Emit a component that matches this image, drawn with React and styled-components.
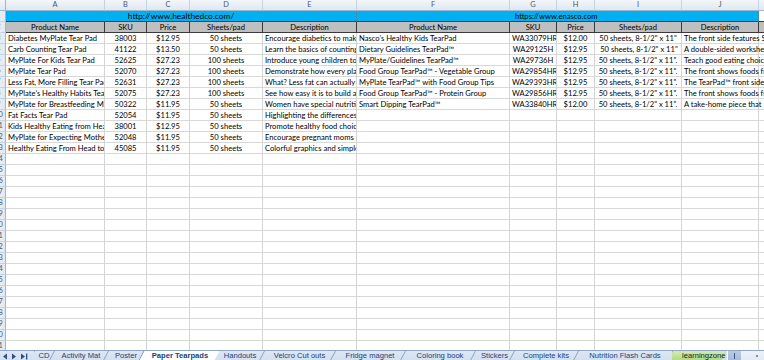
import React from "react";
import styled, { createGlobalStyle, css } from "styled-components";

const Global = createGlobalStyle`
  html, body { margin: 0; padding: 0; background: #ffffff; }
  body { overflow: hidden; }
  * { box-sizing: border-box; }
`;

const CELL_FONT = `"Lato", "Open Sans", "Liberation Sans", sans-serif`;
const UI_FONT = `"Liberation Sans", "DejaVu Sans", sans-serif`;

const COLS = [
  { key: "A", w: 99 },
  { key: "B", w: 42 },
  { key: "C", w: 43 },
  { key: "D", w: 73 },
  { key: "E", w: 94 },
  { key: "F", w: 153 },
  { key: "G", w: 47 },
  { key: "H", w: 38 },
  { key: "I", w: 87 },
  { key: "J", w: 77 },
  { key: "K", w: 90 },
];

const ALIGN = ["left", "center", "center", "center", "left", "left", "center", "center", "center", "left", "left"];

const DATA = [
  ["Diabetes MyPlate Tear Pad", "38003", "$12.95", "50 sheets", "Encourage diabetics to make healthy choices", "Nasco\u2019s Healthy Kids TearPad", "WA33079HR", "$12.00", "50 sheets, 8-1/2\" x 11\"", "The front side features Step"],
  ["Carb Counting Tear Pad", "41122", "$13.50", "50 sheets", "Learn the basics of counting carbs", "Dietary Guidelines TearPad\u2122", "WA29125H", "$12.95", "\u00a050 sheets, 8-1/2\" x 11\"", "A double-sided worksheet"],
  ["MyPlate For Kids Tear Pad", "52625", "$27.23", "100 sheets", "Introduce young children to MyPlate", "MyPlate/Guidelines TearPad\u2122", "WA29736H", "$12.95", "50 sheets, 8-1/2\" x 11\".", "Teach good eating choices"],
  ["MyPlate Tear Pad", "52070", "$27.23", "100 sheets", "Demonstrate how every plate", "Food Group TearPad\u2122 - Vegetable Group", "WA29854HR", "$12.95", "50 sheets, 8-1/2\" x 11\".", "The front shows foods from"],
  ["Less Fat, More Filling Tear Pad", "52631", "$27.23", "100 sheets", "What? Less fat can actually be more filling", "MyPlate TearPad\u2122 with Food Group Tips", "WA29393HR", "$12.95", "50 sheets, 8-1/2\" x 11\".", "The TearPad\u2122 front side"],
  ["MyPlate\u2019s Healthy Habits Tear Pad", "52075", "$27.23", "100 sheets", "See how easy it is to build a", "Food Group TearPad\u2122 - Protein Group", "WA29856HR", "$12.95", "50 sheets, 8-1/2\" x 11\".", "The front shows foods from"],
  ["MyPlate for Breastfeeding Moms", "50322", "$11.95", "50 sheets", "Women have special nutrition needs", "Smart Dipping TearPad\u2122", "WA33840HR", "$12.00", "50 sheets, 8-1/2\" x 11\".", "A take-home piece that"],
  ["Fat Facts Tear Pad", "52054", "$11.95", "50 sheets", "Highlighting the differences between"],
  ["Kids Healthy Eating from Head to Toe", "38001", "$12.95", "50 sheets", "Promote healthy food choices"],
  ["MyPlate for Expecting Mothers", "52048", "$11.95", "50 sheets", "Encourage pregnant moms to"],
  ["Healthy Eating From Head to Toe", "45085", "$11.95", "50 sheets", "Colorful graphics and simple"],
];

const HEADERS = ["Product Name", "SKU", "Price", "Sheets/pad", "Description", "Product Name", "SKU", "Price", "Sheets/pad", "Description", ""];

const TOTAL_ROWS = 31;

const TABS = [
  { name: "CD", w: 20 },
  { name: "Activity Mat", w: 54 },
  { name: "Poster", w: 36 },
  { name: "Paper Tearpads", w: 72, active: true },
  { name: "Handouts", w: 48 },
  { name: "Velcro Cut outs", w: 71 },
  { name: "Fridge magnet", w: 70 },
  { name: "Coloring book", w: 70 },
  { name: "Stickers", w: 39 },
  { name: "Complete kits", w: 64 },
  { name: "Nutrition Flash Cards", w: 94 },
  { name: "learningzone", w: 55, green: true },
];

/* ---------- layout ---------- */

const Page = styled.div`
  width: 764px;
  height: 360px;
  overflow: hidden;
  display: grid;
  grid-template-rows: 350px 20px;
`;

const SheetArea = styled.div`
  overflow: hidden;
  background: #ffffff;
`;

const Grid = styled.div`
  display: grid;
  grid-template-columns: 14px ${COLS.map((c) => `${c.w}px`).join(" ")};
  grid-auto-rows: 11px;
  margin-left: -8px;
  width: max-content;
`;

/* ---------- headers ---------- */

const Corner = styled.div`
  background: linear-gradient(#f4f7fb, #dfe7f1);
  border-right: 1px solid #9eb6ce;
  border-bottom: 1px solid #9eb6ce;
`;

const ColHeader = styled.div`
  background: linear-gradient(#f3f6fa, #e0e7f0);
  border-right: 1px solid #c5d2e0;
  border-bottom: 1px solid #9eb6ce;
  font: 7.4px/10px ${CELL_FONT};
  color: #4a596b;
  text-align: center;
`;

const RowHeader = styled.div`
  background: linear-gradient(90deg, #f3f6fa, #e3e9f1);
  border-right: 1px solid #9eb6ce;
  border-bottom: 1px solid #c5d2e0;
  font: 7.4px/10px ${CELL_FONT};
  color: #4a596b;
  text-align: center;
  white-space: nowrap;
`;

/* ---------- cells ---------- */

const kinds = {
  plain: css`
    background: #ffffff;
    border-right: 1px solid #d4d4d4;
    border-bottom: 1px solid #d8d8d8;
  `,
  link: css`
    background: #00b0f0;
    border-right: 1px solid #3c8fb3;
    border-bottom: 1px solid #3a3a3a;
  `,
  linkEnd: css`
    background: #ffffff;
    border-right: 1px solid #d4d4d4;
    border-bottom: 1px solid #3a3a3a;
  `,
  head: css`
    background: #bfbfbf;
    border-right: 1px solid #3a3a3a;
    border-bottom: 1px solid #3a3a3a;
  `,
};

const Cell = styled.div`
  ${(p) => kinds[p.$kind || "plain"]}
  grid-column: span ${(p) => p.$span || 1};
  padding: 0 ${(p) => p.$pad ?? 2}px;
  font: ${(p) => p.$size || 7.6}px/10px ${CELL_FONT};
  color: #000000;
  text-align: ${(p) => p.$align || "left"};
  white-space: nowrap;
  overflow: ${(p) => (p.$spill ? "visible" : "hidden")};
  position: ${(p) => (p.$spill ? "relative" : "static")};
  z-index: ${(p) => (p.$spill ? 1 : "auto")};
`;

/* ---------- sheet tabs ---------- */

const TabBar = styled.div`
  display: flex;
  align-items: flex-start;
  background: linear-gradient(#dde7f4, #c8d8ec);
  border-top: 1px solid #8ea7c7;
  position: relative;
  z-index: 1;
`;

const Nav = styled.div`
  flex: none;
  width: 34px;
  height: 14px;
  display: flex;
  align-items: flex-start;
  gap: 3px;
  padding: 2px 0 0 2px;
`;

const NavIcon = styled.svg`
  flex: none;
  display: block;
`;

const Tabs = styled.div`
  flex: none;
  display: flex;
  width: 693px;
  overflow: hidden;
`;

const Tab = styled.div`
  position: relative;
  z-index: ${(p) => (p.$active ? 3 : 1)};
  flex: none;
  width: ${(p) => p.$w}px;
  height: 16px;
  margin-top: -1px;
  padding: 1px 0 0 ${(p) => (p.$green ? 10 : 0)}px;
  text-align: ${(p) => (p.$green ? "left" : "center")};
  font: ${(p) => (p.$active ? "bold" : "normal")} 7.6px/10px ${UI_FONT};
  color: ${(p) => (p.$green ? "#102030" : "#1b3f73")};
  white-space: nowrap;
  overflow: ${(p) => (p.$green ? "hidden" : "visible")};

  &::before {
    content: "";
    position: absolute;
    top: ${(p) => (p.$active ? 0 : 1)}px;
    bottom: 0;
    left: 0;
    right: ${(p) => (p.$active ? -4 : 0)}px;
    z-index: -1;
    transform: skewX(-28deg);
    transform-origin: top left;
    border-left: 1px solid ${(p) => (p.$active ? "#7f97b8" : "#8ea3c2")};
    background: ${(p) =>
      p.$active
        ? "#ffffff"
        : p.$green
        ? "linear-gradient(#d2ebb0, #9fd061)"
        : "transparent"};
  }
`;

const Splitter = styled.div`
  flex: none;
  width: 14px;
  height: 14px;
  border-left: 1px solid #ffffff;
  background: linear-gradient(#b9cbe3, #9db4d4);
  display: flex;
  justify-content: center;
  padding-top: 2px;
`;

const SplitTick = styled.div`
  width: 1px;
  height: 6px;
  background: #3d5a82;
`;

const ScrollStart = styled.div`
  flex: 1;
  height: 14px;
  background: linear-gradient(#edf2f9, #dbe5f1);
  display: flex;
  justify-content: flex-end;
  padding: 4px 6px 0 0;
`;

const Dot = styled.div`
  width: 2px;
  height: 2px;
  background: #7d8ea6;
`;

function Arrow({ dir, bar }) {
  return (
    <NavIcon width={bar ? 8 : 6} height="7" viewBox={bar ? "0 0 8 7" : "0 0 6 7"}>
      {dir === "left" ? (
        <path d="M5 0.5 L1 3.5 L5 6.5 Z" fill="#2c4f86" />
      ) : (
        <path d="M1 0.5 L5 3.5 L1 6.5 Z" fill="#2c4f86" />
      )}
      {bar && <rect x="6" y="0.5" width="1.3" height="6" fill="#2c4f86" />}
    </NavIcon>
  );
}

export default function App() {
  const rows = [];
  for (let r = 3; r <= TOTAL_ROWS; r++) rows.push(r);

  return (
    <>
      <Global />
      <Page>
        <SheetArea>
          <Grid>
            <Corner />
            {COLS.map((c) => (
              <ColHeader key={c.key}>{c.key}</ColHeader>
            ))}

            <RowHeader>1</RowHeader>
            <Cell $kind="link" $span={5} $align="center" $pad={0} $size={8.4}>
              http://www.healthedco.com/
            </Cell>
            <Cell $kind="link" $span={5} $pad={158}>
              https://www.enasco.com
            </Cell>
            <Cell $kind="linkEnd" />

            <RowHeader>2</RowHeader>
            {HEADERS.map((h, i) => (
              <Cell key={i} $kind="head" $align="center">
                {h}
              </Cell>
            ))}

            {rows.map((r) => {
              const data = DATA[r - 3] || [];
              return (
                <React.Fragment key={r}>
                  <RowHeader>{r}</RowHeader>
                  {COLS.map((c, i) => (
                    <Cell key={c.key} $align={ALIGN[i]} $spill={i === 9}>
                      {data[i] || ""}
                    </Cell>
                  ))}
                </React.Fragment>
              );
            })}
          </Grid>
        </SheetArea>

        <TabBar>
          <Nav>
            <Arrow dir="left" />
            <Arrow dir="right" />
            <Arrow dir="right" bar />
          </Nav>
          <Tabs>
            {TABS.map((t) => (
              <Tab key={t.name} $w={t.w} $active={t.active} $green={t.green}>
                {t.name}
              </Tab>
            ))}
          </Tabs>
          <Splitter>
            <SplitTick />
          </Splitter>
          <ScrollStart>
            <Dot />
          </ScrollStart>
        </TabBar>
      </Page>
    </>
  );
}
